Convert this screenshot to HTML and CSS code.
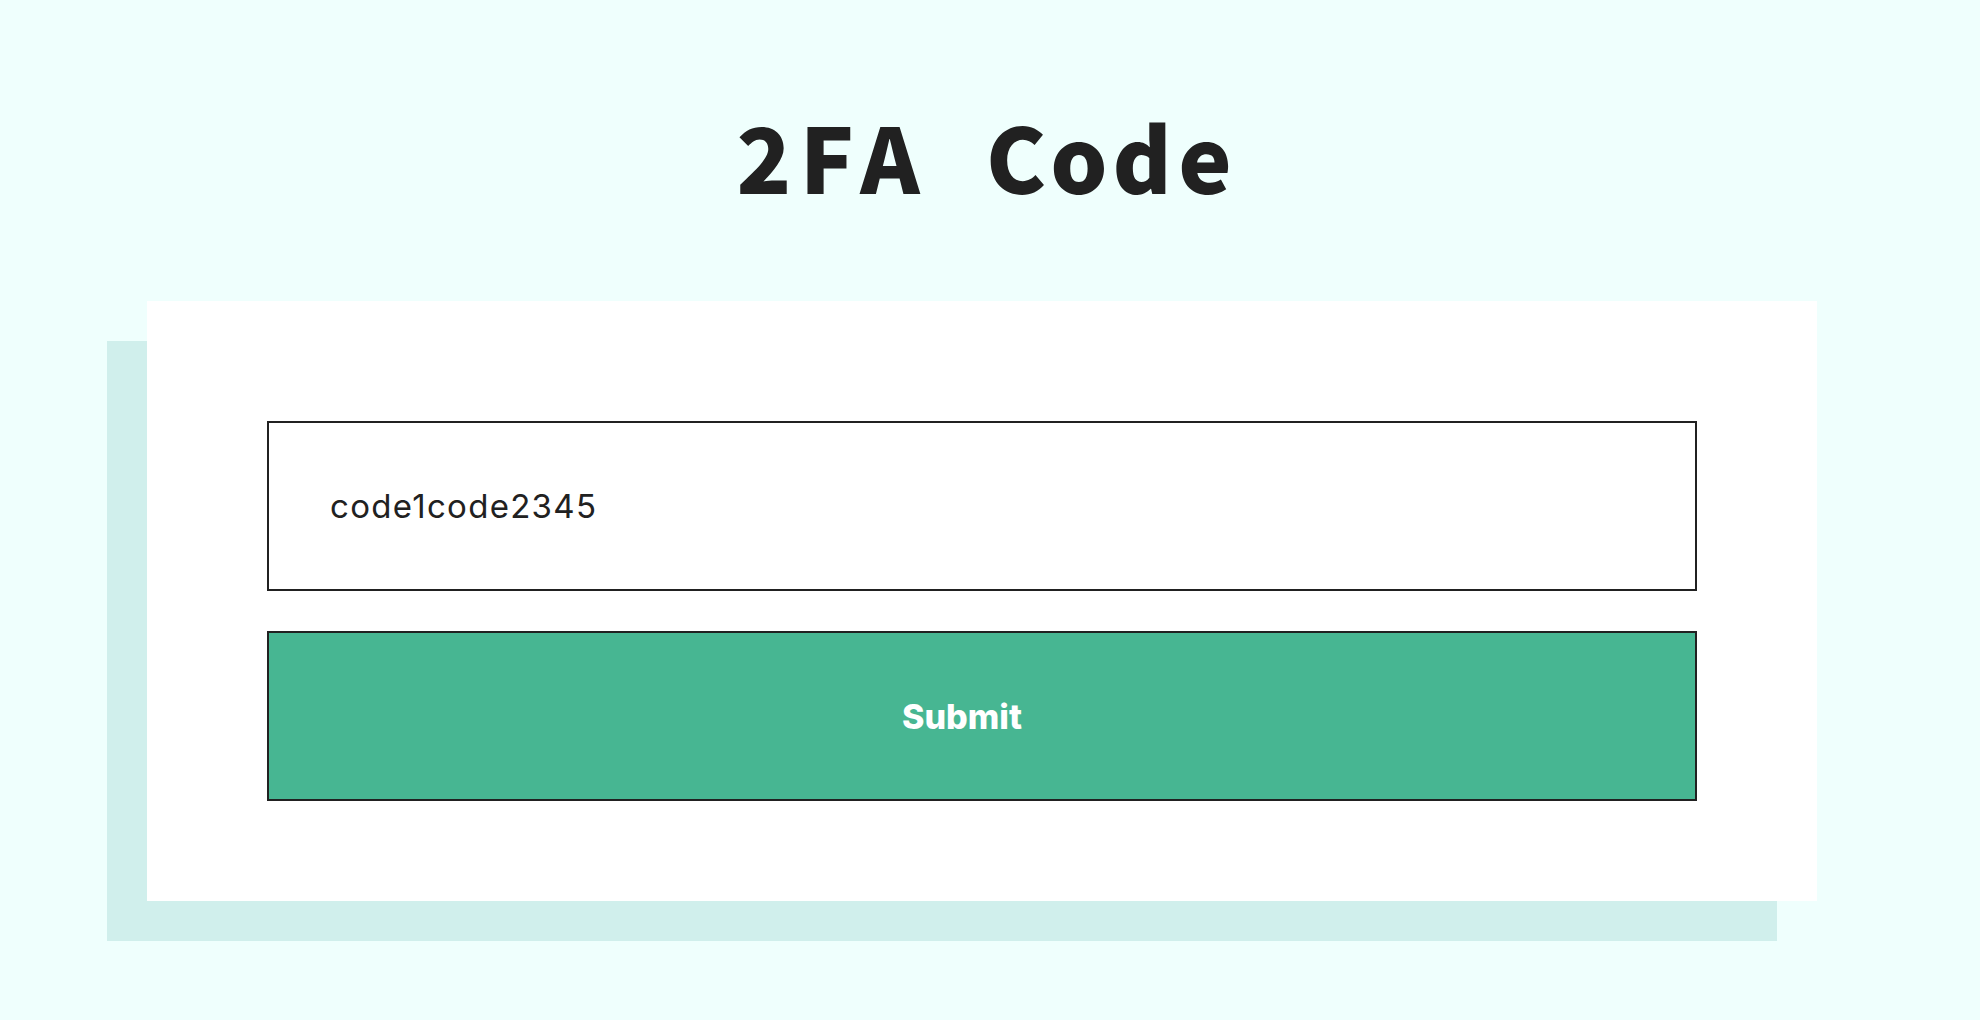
FILE: index.html
```html
<!DOCTYPE html>
<html lang="en">
<head>
<meta charset="utf-8">
<title>2FA Code</title>
<link rel="stylesheet" href="styles.css">
</head>
<body>
<main class="page">
  <h1 class="title" aria-label="2FA Code"><span class="ch">2</span><span class="ch">F</span><span class="ch">A</span><span class="ch"> </span><span class="ch">C</span><span class="ch">o</span><span class="ch">d</span><span class="ch">e</span></h1>
  <form class="card">
    <input class="code-input" type="text" value="code1code2345">
    <button class="submit" type="button">Submit</button>
  </form>
</main>
</body>
</html>
```

FILE: styles.css
```css
html, body {
  margin: 0;
  padding: 0;
  background: #effffd;
}
.page {
  width: 1980px;
  height: 1020px;
  box-sizing: border-box;
  padding-top: 90px;
}
.title {
  margin: 0;
  height: 211px;
  box-sizing: border-box;
  padding-right: 11px;
  display: flex;
  justify-content: center;
  align-items: flex-start;
  font-family: "Noto Sans CJK JP", "Noto Sans", sans-serif;
  font-weight: 900;
  font-size: 90px;
  line-height: 130px;
  color: #212121;
}
.ch {
  width: 63px;
  text-align: center;
  white-space: pre;
}
.card {
  margin: 0 0 0 147px;
  width: 1670px;
  height: 600px;
  box-sizing: border-box;
  padding: 120px 120px 100px;
  background: #ffffff;
  box-shadow: -40px 40px 0 #d0efec;
  display: flex;
  flex-direction: column;
  gap: 40px;
}
.code-input {
  height: 170px;
  box-sizing: border-box;
  border: 2px solid #212121;
  padding: 0 0 0 61px;
  margin: 0;
  background: #fff;
  font-family: "Inter", "Liberation Sans", sans-serif;
  font-size: 33px;
  letter-spacing: 1.3px;
  color: #212121;
  outline: none;
}
.submit {
  height: 170px;
  box-sizing: border-box;
  border: 2px solid #212121;
  margin: 0;
  padding: 0 40px 0 0;
  background: #47b692;
  color: #ffffff;
  font-family: "Inter", "Liberation Sans", sans-serif;
  font-weight: 800;
  font-size: 34px;
  cursor: pointer;
}
```
